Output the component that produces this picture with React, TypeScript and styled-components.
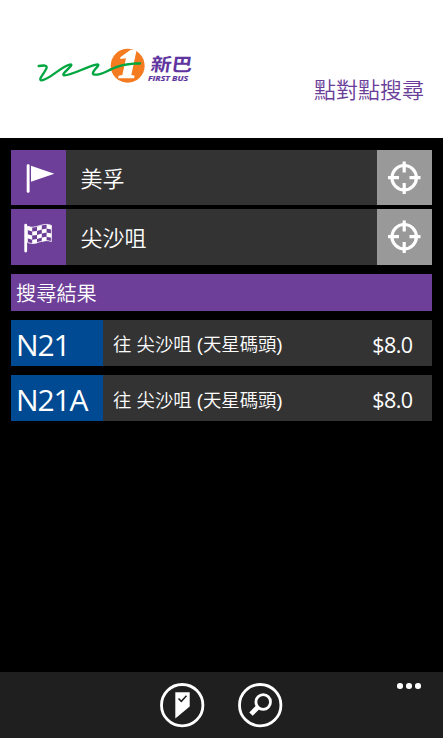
import * as React from 'react';
import styled, { createGlobalStyle } from 'styled-components';

type Route = {
  code: string;
  destination: string;
  fare: string;
};

const routes: Route[] = [
  { code: 'N21', destination: '往 尖沙咀 (天星碼頭)', fare: '$8.0' },
  { code: 'N21A', destination: '往 尖沙咀 (天星碼頭)', fare: '$8.0' },
];

const GlobalStyle = createGlobalStyle`
  * {
    box-sizing: border-box;
  }

  body {
    margin: 0;
    background: #000;
    color: #fff;
    font-family: 'Open Sans', 'Noto Sans CJK TC', sans-serif;
  }
`;

const Screen = styled.div`
  display: flex;
  flex-direction: column;
  height: 100vh;
  min-height: 738px;
  overflow: hidden;
`;

const Header = styled.header`
  display: flex;
  justify-content: space-between;
  height: 138px;
  padding: 40px 19px 0 30px;
  background: #fff;
`;

const PageTitle = styled.h1`
  margin: 34px 0 0;
  font-size: 22px;
  line-height: 30px;
  font-weight: 350;
  color: #6a3d98;
`;

const Content = styled.main`
  flex: 1;
  display: flex;
  flex-direction: column;
  padding: 11.5px 11px 0;
`;

const Field = styled.div`
  display: flex;
  height: 55.3px;
  margin-bottom: 4.7px;
  background: #333;
`;

const FieldIcon = styled.div`
  width: 55px;
  background: #6e3f98;
`;

const FieldValue = styled.div`
  flex: 1;
  padding-left: 14.5px;
  font-size: 22px;
  line-height: 56px;
  font-weight: 350;
`;

const LocateButton = styled.button`
  width: 55.5px;
  padding: 0;
  border: 0;
  background: #999;
`;

const ResultsTitle = styled.h2`
  height: 37px;
  margin: 4.5px 0 9px;
  padding-left: 5px;
  background: #6e3f98;
  font-size: 20.2px;
  line-height: 39px;
  font-weight: 350;
`;

const ResultRow = styled.div`
  display: flex;
  align-items: center;
  height: 46px;
  margin-bottom: 9.5px;
  padding-right: 19.5px;
  background: #333;
`;

const RouteCode = styled.div`
  width: 92px;
  height: 100%;
  padding-left: 5px;
  background: #004a93;
  font-size: 30px;
  line-height: 50px;
  letter-spacing: -1.1px;
`;

const Destination = styled.div`
  flex: 1;
  padding: 5px 0 0 10px;
  font-family: 'Liberation Sans', 'Noto Sans CJK TC', sans-serif;
  font-size: 18.4px;
  line-height: 46px;
  font-weight: 350;
  white-space: nowrap;
`;

const Fare = styled.div`
  padding-top: 4px;
  font-size: 21.5px;
  line-height: 46px;
  letter-spacing: -0.6px;
`;

const AppBar = styled.footer`
  position: relative;
  display: flex;
  justify-content: center;
  gap: 33px;
  height: 66px;
  padding-top: 11px;
  background: #1f1f1f;
`;

const BarButton = styled.button`
  width: 45px;
  height: 45px;
  padding: 0;
  border: 0;
  background: none;
`;

const MoreButton = styled.button`
  position: absolute;
  top: 9px;
  right: 20px;
  display: flex;
  gap: 3.5px;
  padding: 2px;
  border: 0;
  background: none;
`;

const Dot = styled.span`
  width: 5.6px;
  height: 5.6px;
  border-radius: 50%;
  background: #fff;
`;

function Logo() {
  return (
    <svg width="170" height="50" viewBox="0 0 510 150" role="img" aria-label="新巴 First Bus">
      <circle cx="293" cy="77" r="51" fill="#f47b20" />
      <path d="M271 52 L302 29 L320 29 L304 105 L314 107 L312 115 L264 115 L266 107 L277 105 L288 55 L271 57 Z" fill="#fff" />
      <path
        d="M26 78 C40 76 54 74 49 86 C43 100 22 120 35 121 C60 119 96 76 122 73 C134 74 90 103 102 106 C126 107 176 76 203 73 C214 74 176 101 193 104 C215 105 228 94 243 88"
        fill="none"
        stroke="#00a63f"
        strokeWidth="7"
        strokeLinecap="round"
        strokeLinejoin="round"
      />
      <path d="M238 87 C262 74 290 67 332 67 C335 69 334 73 330 74 C295 73 268 80 241 92 Z" fill="#00a63f" />
      <g fill="#5f35a0" fontWeight="700">
        <text
          transform="translate(360 94) skewX(-8) scale(1.16 1)"
          fontFamily="'Noto Sans CJK TC', sans-serif"
          fontSize="54"
        >
          新巴
        </text>
        <text
          x="354"
          y="124"
          fontFamily="'Open Sans', sans-serif"
          fontStyle="italic"
          fontSize="21"
          textLength="120"
          lengthAdjust="spacingAndGlyphs"
          stroke="#5f35a0"
          strokeWidth="0.6"
        >
          FIRST BUS
        </text>
      </g>
    </svg>
  );
}

function FlagIcon() {
  return (
    <svg width="55" height="55" viewBox="0 0 55 55" fill="#fff">
      <rect x="15.7" y="14.2" width="2.9" height="28.6" rx="1.3" />
      <path d="M20 15.8 L43.3 23.8 L20 31.8 Z" />
    </svg>
  );
}

// top edge of the waving flag at each column boundary
const wave = [17, 18.4, 17.8, 16.3, 15.4, 16.4];
const cellWidth = 4.8;
const cellHeight = 4.1;

function CheckeredFlagIcon() {
  const cells: string[] = [];
  for (let col = 0; col < 5; col++) {
    for (let row = 0; row < 4; row++) {
      if ((col + row) % 2 === 1) continue;
      const x = 16.4 + col * cellWidth;
      const left = wave[col] + row * cellHeight;
      const right = wave[col + 1] + row * cellHeight;
      cells.push(`M${x} ${left} L${x + cellWidth} ${right} V${right + cellHeight} L${x} ${left + cellHeight} Z`);
    }
  }
  return (
    <svg width="55" height="55" viewBox="0 0 55 55" fill="#fff">
      <rect x="13.3" y="14.8" width="2.8" height="28.6" rx="1.3" />
      <path d={cells.join(' ')} />
      <path
        d="M16.5 17.2 C24 21 32 12.5 40.4 16.4 V32.6 C32 28.7 24 37.3 16.5 33.4 Z"
        fill="none"
        stroke="#fff"
        strokeWidth="0.8"
      />
    </svg>
  );
}

function TargetIcon() {
  return (
    <svg width="55" height="55" viewBox="0 0 55 55" fill="none" stroke="#fff" strokeWidth="3.2">
      <circle cx="27.2" cy="27.7" r="12.2" />
      <path d="M27.2 11.5 V22.5 M27.2 33 V44 M11 27.7 H22 M32.5 27.7 H43.5" />
    </svg>
  );
}

function BookmarkIcon() {
  return (
    <svg width="45" height="45" viewBox="0 0 45 45">
      <circle cx="22.2" cy="22.2" r="20.7" fill="none" stroke="#fff" strokeWidth="2.8" />
      <path d="M15.3 9.3 H29.7 V23.5 L15.3 35.5 Z" fill="#fff" />
      <path d="M18.5 15.5 L21.3 18.3 L26.5 12.7" fill="none" stroke="#1f1f1f" strokeWidth="1.5" />
    </svg>
  );
}

function SearchIcon() {
  return (
    <svg width="45" height="45" viewBox="0 0 45 45" fill="none" stroke="#fff">
      <circle cx="22.2" cy="22.2" r="20.7" strokeWidth="2.8" />
      <circle cx="25.2" cy="19" r="7.3" strokeWidth="2.8" />
      <path d="M20 24 L13 31.2" strokeWidth="4.8" />
    </svg>
  );
}

export default function App() {
  return (
    <Screen>
      <GlobalStyle />
      <Header>
        <Logo />
        <PageTitle>點對點搜尋</PageTitle>
      </Header>
      <Content>
        <Field>
          <FieldIcon><FlagIcon /></FieldIcon>
          <FieldValue>美孚</FieldValue>
          <LocateButton aria-label="定位"><TargetIcon /></LocateButton>
        </Field>
        <Field>
          <FieldIcon><CheckeredFlagIcon /></FieldIcon>
          <FieldValue>尖沙咀</FieldValue>
          <LocateButton aria-label="定位"><TargetIcon /></LocateButton>
        </Field>
        <ResultsTitle>搜尋結果</ResultsTitle>
        {routes.map((route) => (
          <ResultRow key={route.code}>
            <RouteCode>{route.code}</RouteCode>
            <Destination>{route.destination}</Destination>
            <Fare>{route.fare}</Fare>
          </ResultRow>
        ))}
      </Content>
      <AppBar>
        <BarButton aria-label="書籤"><BookmarkIcon /></BarButton>
        <BarButton aria-label="搜尋"><SearchIcon /></BarButton>
        <MoreButton aria-label="更多">
          <Dot />
          <Dot />
          <Dot />
        </MoreButton>
      </AppBar>
    </Screen>
  );
}
